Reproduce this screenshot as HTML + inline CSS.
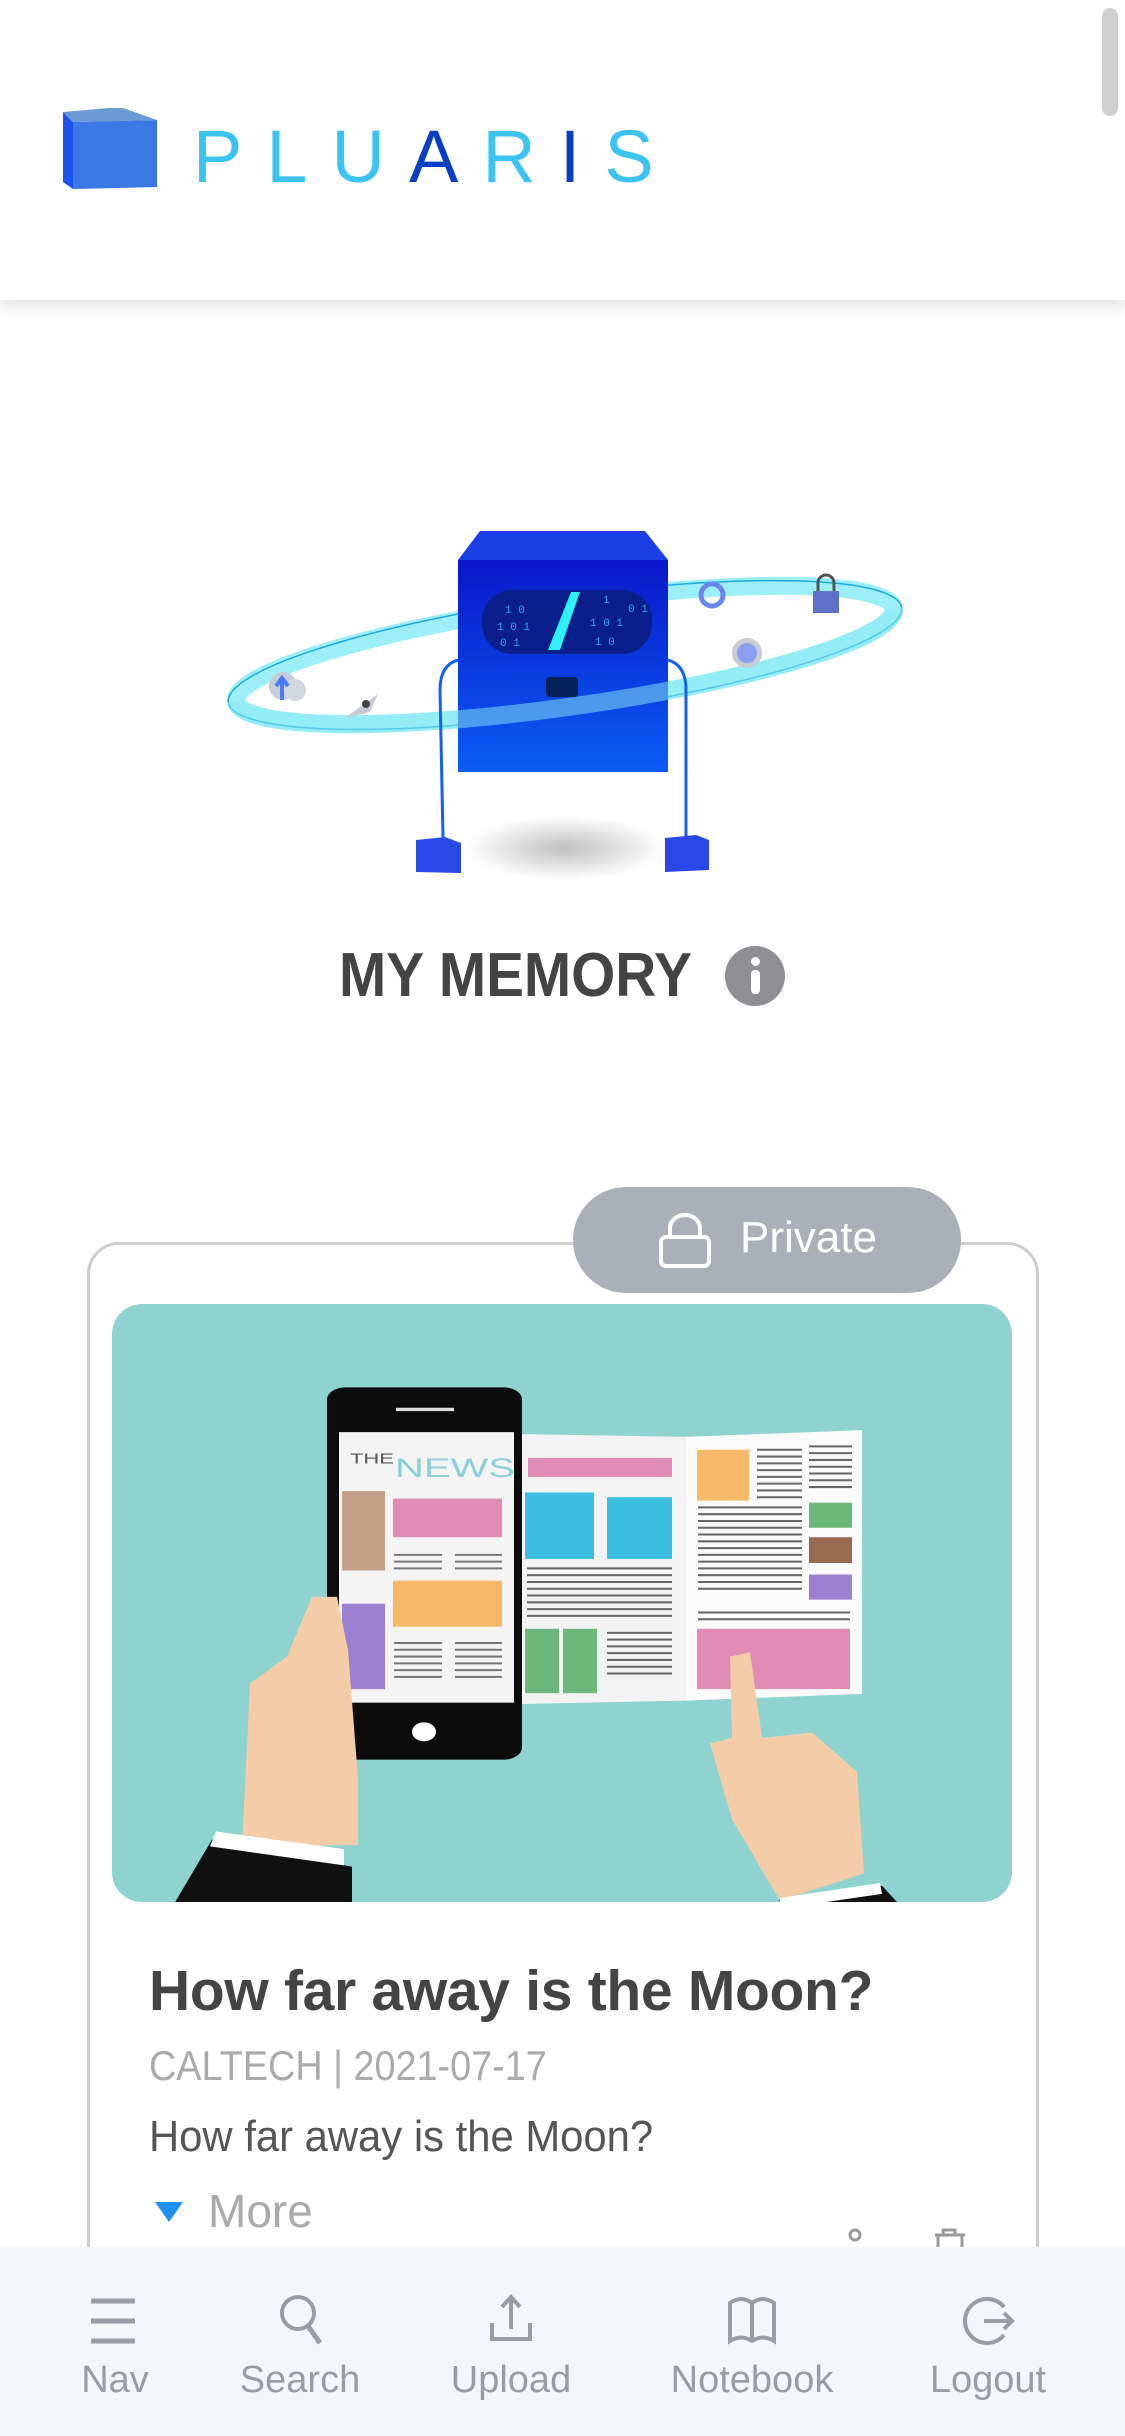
<!DOCTYPE html>
<html><head><meta charset="utf-8"><style>
*{margin:0;padding:0;box-sizing:border-box}
body{width:1125px;height:2436px;overflow:hidden;background:#fff;font-family:"Liberation Sans",sans-serif;position:relative}
.abs{position:absolute}
#hdr{left:0;top:0;width:1125px;height:300px;background:#fff;box-shadow:0 6px 14px rgba(0,0,0,0.12);z-index:2}
#logo{left:193px;top:114px;font-size:74px;letter-spacing:24px;color:#3cc3f2;line-height:86px;white-space:nowrap}
#logo b{font-weight:normal;color:#0a3fc4}
#scroll{left:1102px;top:8px;width:16px;height:108px;border-radius:8px;background:#cfcfcf}
#title{left:339px;top:940px;font-size:62px;font-weight:bold;color:#444;white-space:nowrap;transform:scaleX(0.915);transform-origin:left}
#info{left:725px;top:946px;width:60px;height:60px;border-radius:50%;background:#8e8e93}
#card{left:87px;top:1242px;width:952px;height:1100px;border:3px solid #cdcdcd;border-radius:32px}
#pill{left:573px;top:1187px;width:388px;height:106px;border-radius:53px;background:#abafb7;color:#fff;font-size:44px}
#img{left:112px;top:1304px;width:900px;height:598px;border-radius:30px;overflow:hidden;background:#8ed3cf}
.t1{left:149px;top:1958px;font-size:57px;font-weight:bold;color:#444;white-space:nowrap;letter-spacing:-0.3px}
.t2{left:149px;top:2042px;font-size:42px;color:#aaa;white-space:nowrap;transform:scaleX(0.9);transform-origin:left}
.t3{left:149px;top:2112px;font-size:44px;color:#555;white-space:nowrap;transform:scaleX(0.95);transform-origin:left}
.t4{left:208px;top:2184px;font-size:46px;color:#aaa}
#nav{left:0;top:2247px;width:1125px;height:189px;background:#f5f6fa;z-index:3}
.ni{position:absolute;top:0;width:200px;text-align:center}
.ni span{position:absolute;left:0;width:200px;top:112px;font-size:38px;color:#9a9ca3;text-align:center}
.ni svg{position:absolute;left:70px;top:44px}
</style></head><body>
<div id="hdr" class="abs">
 <svg class="abs" style="left:60px;top:108px" width="100" height="84" viewBox="0 0 100 84">
  <polygon points="3,4 13,14 13,81 3,74" fill="#1a55f0"/>
  <polygon points="13,14 97,12 97,79 13,81" fill="#3b78e6"/>
  <polygon points="3,4 60,-1 97,12 13,14" fill="#6b9bd4"/>
 </svg>
 <div id="logo" class="abs">PLU<b>A</b>R<b>I</b>S</div>
 <div id="scroll" class="abs"></div>
</div>

<svg class="abs" style="left:0;top:0" width="1125" height="920" viewBox="0 0 1125 920">
 <defs>
  <linearGradient id="bg" x1="0" y1="0" x2="0" y2="1"><stop offset="0" stop-color="#0a18c8"/><stop offset="1" stop-color="#0a5cf5"/></linearGradient>
  <radialGradient id="sh"><stop offset="0" stop-color="#000" stop-opacity="0.25"/><stop offset="1" stop-color="#000" stop-opacity="0"/></radialGradient>
 </defs>
 <ellipse cx="565" cy="848" rx="100" ry="32" fill="url(#sh)"/>
 <g transform="rotate(-8 565 655)">
  <ellipse cx="565" cy="655" rx="332" ry="52" fill="none" stroke="#8cecf6" stroke-width="18" opacity="0.85"/>
  <ellipse cx="565" cy="655" rx="340" ry="58" fill="none" stroke="#1fa9d8" stroke-width="1.5"/>
 </g>
 <polygon points="458,560 480,531 645,531 668,560" fill="#1b3fe6"/>
 <rect x="458" y="560" width="210" height="212" fill="url(#bg)"/>
 <rect x="482" y="590" width="170" height="64" rx="30" fill="#0a1f8c"/>
 <polygon points="548,650 560,650 580,592 571,592" fill="#2ef0f8"/>
 <g fill="#3aa0f0" font-size="11" font-family="Liberation Mono,monospace">
  <text x="505" y="613">1 0</text><text x="497" y="630">1 0 1</text><text x="500" y="646">0 1</text>
  <text x="603" y="603">1</text><text x="590" y="626">1 0 1</text><text x="595" y="645">1 0</text><text x="628" y="612">0 1</text>
 </g>
 <rect x="546" y="677" width="32" height="20" rx="4" fill="#06205a"/>
 <g transform="rotate(-8 565 655)">
  <path d="M233,655 A332,52 0 0 0 897,655" fill="none" stroke="#8cecf6" stroke-width="18" opacity="0.5"/>
 </g>
 <path d="M458,660 Q440,665 440,690 L443,838" stroke="#1560f0" stroke-width="3" fill="none"/>
 <path d="M668,660 Q686,665 686,690 L686,838" stroke="#1560f0" stroke-width="3" fill="none"/>
 <polygon points="416,840 445,837 461,843 461,873 416,872" fill="#2a48e8"/>
 <polygon points="665,838 696,835 709,840 709,870 665,872" fill="#2a48e8"/>
 <circle cx="283" cy="686" r="14" fill="#c7ccd6"/><circle cx="295" cy="690" r="11" fill="#d3d7de"/>
 <path d="M282,700 L282,680 M276,686 L282,678 L288,686" stroke="#4a7cf5" stroke-width="4" fill="none"/>
 <path d="M345,718 L378,694 L370,712 Z" fill="#c5cad4"/><circle cx="366" cy="704" r="4" fill="#444"/>
 <circle cx="712" cy="595" r="11" fill="none" stroke="#6b88e8" stroke-width="5"/>
 <circle cx="747" cy="653" r="15" fill="#c8ccd4"/><circle cx="747" cy="653" r="10" fill="#8aa0ee"/>
 <rect x="813" y="591" width="26" height="22" fill="#6070c8"/><path d="M818,591 v-8 a8,8 0 0 1 16,0 v8" stroke="#555" stroke-width="3" fill="none"/>
</svg>

<div id="title" class="abs">MY MEMORY</div>
<div id="info" class="abs"><div class="abs" style="left:26px;top:11px;width:9px;height:9px;border-radius:5px;background:#fff"></div><div class="abs" style="left:26px;top:24px;width:9px;height:24px;border-radius:4px;background:#fff"></div></div>

<div id="card" class="abs"></div>
<div id="pill" class="abs">
 <svg class="abs" style="left:85px;top:26px" width="54" height="56" viewBox="0 0 54 56"><rect x="3" y="24" width="48" height="29" rx="5" fill="none" stroke="#fff" stroke-width="4"/><path d="M12,24 V15 a15,13 0 0 1 30,0 V24" fill="none" stroke="#fff" stroke-width="4"/></svg>
 <div class="abs" style="left:167px;top:26px">Private</div>
</div>

<div id="img" class="abs">
<svg width="900" height="598" viewBox="0 0 900 598">
<g transform="scale(1,0.678)">
 <polygon points="410,192 574,196 574,585 410,590" fill="#f3f3f3"/>
 <polygon points="574,196 750,186 750,575 574,585" fill="#fafafa"/>
 <rect x="416" y="227" width="144" height="28" fill="#e08cb4"/>
 <rect x="413" y="278" width="69" height="98" fill="#3bbfe0"/>
 <rect x="495" y="285" width="65" height="91" fill="#3bbfe0"/>
 <rect x="413" y="479" width="34" height="95" fill="#6cb87a"/><rect x="451" y="479" width="34" height="95" fill="#6cb87a"/>
 <g stroke="#666" stroke-width="3">
  <path d="M415,390H560M415,400H560M415,410H560M415,420H560M415,430H560M415,440H560M415,450H560M415,460H560"/>
  <path d="M495,485H560M495,495H560M495,505H560M495,515H560M495,525H560M495,535H560M495,545H560"/>
  <path d="M645,215H690M645,225H690M645,235H690M645,245H690M645,255H690M645,265H690M645,275H690M645,285H690"/>
  <path d="M697,210H740M697,220H740M697,230H740M697,240H740M697,250H740M697,260H740M697,270H740"/>
  <path d="M586,300H690M586,310H690M586,320H690M586,330H690M586,340H690M586,350H690M586,360H690M586,370H690M586,380H690M586,390H690M586,400H690M586,410H690M586,420H690"/>
  <path d="M586,455H738M586,465H738"/>
 </g>
 <rect x="585" y="215" width="52" height="75" fill="#f5b969"/>
 <rect x="697" y="293" width="43" height="37" fill="#6cb87a"/>
 <rect x="697" y="344" width="43" height="38" fill="#9a6a4f"/>
 <rect x="697" y="399" width="43" height="37" fill="#9b7fd0"/>
 <rect x="585" y="479" width="153" height="89" fill="#e08cb4"/>
 <rect x="215" y="123" width="195" height="549" rx="18" fill="#0c0c0c"/>
 <rect x="284" y="153" width="58" height="5" fill="#ddd"/>
 <ellipse cx="312" cy="631" rx="12" ry="14" fill="#fff"/>
 <rect x="227" y="189" width="175" height="399" fill="#f4f4f4"/>
 <text x="238" y="235" font-size="22" fill="#555" font-family="Liberation Sans,sans-serif">THE</text>
 <text x="283" y="255" font-size="40" fill="#8ccfd8" font-family="Liberation Sans,sans-serif">NEWS</text>
 <rect x="230" y="276" width="43" height="117" fill="#c4a088"/>
 <rect x="230" y="442" width="43" height="126" fill="#9b7fd0"/>
 <rect x="281" y="287" width="109" height="57" fill="#e08cb4"/>
 <rect x="281" y="408" width="109" height="68" fill="#f5b969"/>
 <g stroke="#777" stroke-width="3"><path d="M282,370H330M282,380H330M282,390H330M343,370H390M343,380H390M343,390H390M282,500H330M282,510H330M282,520H330M282,530H330M282,540H330M282,550H330M343,500H390M343,510H390M343,520H390M343,530H390M343,540H390M343,550H390"/></g>
 <polygon points="130,800 138,560 175,520 200,432 225,432 236,510 246,700 246,798 " fill="#f5cca8"/>
 <polygon points="60,890 100,790 240,830 240,890" fill="#111"/>
 <polygon points="104,778 232,804 232,828 98,800" fill="#fff"/>
 <polygon points="618,520 638,514 650,640 700,632 745,690 752,840 668,880 620,760 598,648 620,640" fill="#f5cca8"/>
 <polygon points="666,880 770,858 790,890 700,890" fill="#111"/>
 <polygon points="668,876 768,854 770,870 668,892" fill="#fff"/>
</g>
</svg>
</div>

<div class="abs t1">How far away is the Moon?</div>
<div class="abs t2">CALTECH | 2021-07-17</div>
<div class="abs t3">How far away is the Moon?</div>
<svg class="abs" style="left:155px;top:2202px" width="30" height="22" viewBox="0 0 30 22"><polygon points="0,0 28,0 14,20" fill="#1e90f0"/></svg>
<div class="abs t4">More</div>
<svg class="abs" style="left:825px;top:2225px" width="140" height="30" viewBox="0 0 140 30"><circle cx="30" cy="10" r="5" fill="none" stroke="#999" stroke-width="3"/><path d="M110,10h30M118,10v-5h12v5M113,10v20M137,10v20" stroke="#999" stroke-width="3" fill="none"/></svg>

<div id="nav" class="abs">
 <div class="ni" style="left:15px"><svg width="60" height="60" viewBox="0 0 60 60"><path d="M6,10H50M6,30H50M6,50H50" stroke="#9a9ca3" stroke-width="5"/></svg><span>Nav</span></div>
 <div class="ni" style="left:200px"><svg width="60" height="60" viewBox="0 0 60 60"><circle cx="28" cy="22" r="16" fill="none" stroke="#9a9ca3" stroke-width="4"/><path d="M38,35L50,52" stroke="#9a9ca3" stroke-width="5"/></svg><span>Search</span></div>
 <div class="ni" style="left:411px"><svg width="60" height="60" viewBox="0 0 60 60"><path d="M30,6V38M21,16L30,6L39,16M11,32V48H49V32" stroke="#9a9ca3" stroke-width="4" fill="none"/></svg><span>Upload</span></div>
 <div class="ni" style="left:652px"><svg width="60" height="60" viewBox="0 0 60 60"><path d="M8,12Q19,4 30,12Q41,4 52,12V50Q41,43 30,50Q19,43 8,50Z M30,12V50" stroke="#9a9ca3" stroke-width="4" fill="none"/></svg><span>Notebook</span></div>
 <div class="ni" style="left:888px"><svg width="60" height="60" viewBox="0 0 60 60"><path d="M46,16A22,22 0 1 0 46,44" stroke="#9a9ca3" stroke-width="4" fill="none"/><path d="M26,30H54M46,22L54,30L46,38" stroke="#9a9ca3" stroke-width="4" fill="none"/></svg><span>Logout</span></div>
</div>
</body></html>
